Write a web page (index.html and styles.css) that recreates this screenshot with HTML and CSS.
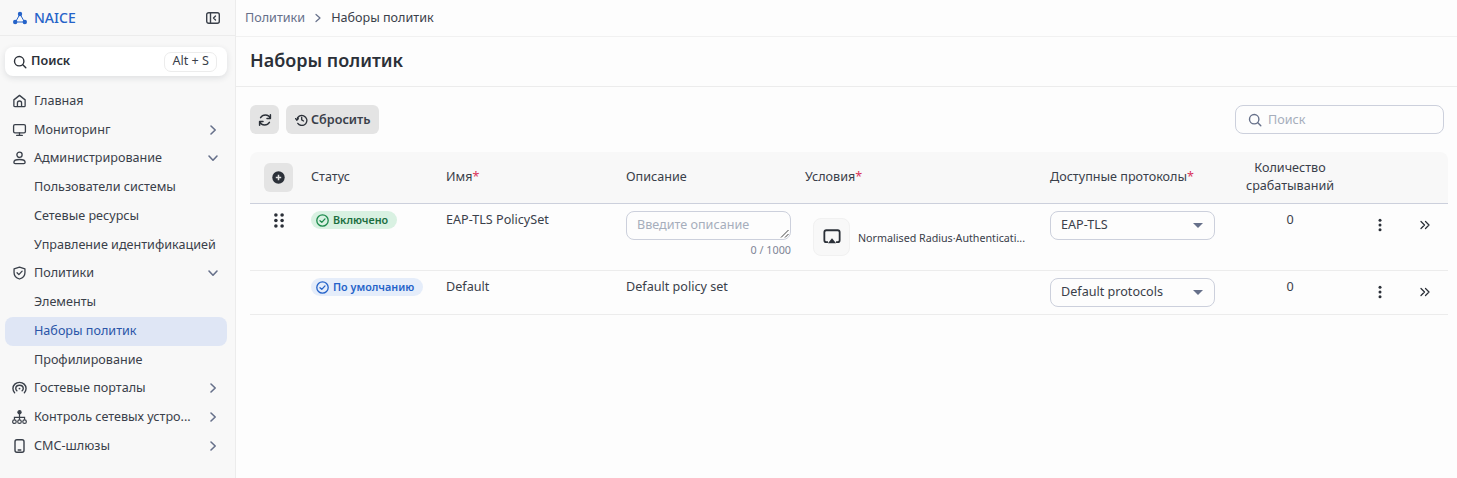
FILE: index.html
```html
<!DOCTYPE html>
<html lang="ru">
<head>
<meta charset="utf-8">
<title>Наборы политик</title>
<link rel="stylesheet" href="styles.css">
</head>
<body>
<div class="app">
  <aside class="sidebar">
    <div class="brand">
      <div class="logo">
        <svg width="16" height="16" viewBox="0 0 16 16" fill="none"><path d="M8 4L3.5 12H12.5Z" stroke="#2563c9" stroke-width="1"/><circle cx="8" cy="4" r="2.2" fill="#2563c9"/><circle cx="3.2" cy="12" r="2.2" fill="#2563c9"/><circle cx="12.8" cy="12" r="2.2" fill="#2563c9"/></svg>
        <span>NAICE</span>
      </div>
      <svg class="collapse" width="14" height="14" viewBox="0 0 14 14" fill="none" stroke="#3a404a" stroke-width="1.4"><rect x="0.7" y="1.7" width="12.6" height="10.6" rx="2"/><path d="M4.5 2V12" /><path d="M9.5 5L7.5 7L9.5 9" stroke-linecap="round" stroke-linejoin="round"/></svg>
    </div>
    <div class="quick">
      <svg width="14" height="14" viewBox="0 0 14 14" fill="none" stroke="#2b3038" stroke-width="1.4" stroke-linecap="round"><circle cx="6.2" cy="6.2" r="4.7"/><path d="M9.8 9.8L12.8 12.8"/></svg>
      <span class="quick-label">Поиск</span>
      <span class="kbd">Alt + S</span>
    </div>
    <nav class="nav">
      <div class="item">
        <svg class="ico" viewBox="0 0 16 16" fill="none" stroke="#3a404a" stroke-width="1.4" stroke-linejoin="round"><path d="M2 6.8L8 2L14 6.8V13C14 13.6 13.6 14 13 14H3C2.4 14 2 13.6 2 13Z"/><path d="M5.8 14V10.2C5.8 9 6.8 8 8 8S10.2 9 10.2 10.2V14"/></svg>
        <span class="label">Главная</span>
      </div>
      <div class="item">
        <svg class="ico" viewBox="0 0 16 16" fill="none" stroke="#3a404a" stroke-width="1.4" stroke-linecap="round"><rect x="1.7" y="2.2" width="12.6" height="8.8" rx="1.5"/><path d="M8 11V13.6M5 13.8H11"/></svg>
        <span class="label">Мониторинг</span>
        <svg class="chev" viewBox="0 0 12 12" fill="none" stroke="#66708a" stroke-width="1.6" stroke-linecap="round" stroke-linejoin="round"><path d="M4 2L8.2 6L4 10"/></svg>
      </div>
      <div class="item">
        <svg class="ico" viewBox="0 0 16 16" fill="none" stroke="#3a404a" stroke-width="1.4"><circle cx="8" cy="4.6" r="2.8"/><path d="M2 12.6C2 10.6 4.6 9.6 8 9.6S14 10.6 14 12.6C14 13.6 13.4 14 12.6 14H3.4C2.6 14 2 13.6 2 12.6Z"/></svg>
        <span class="label">Администрирование</span>
        <svg class="chev" viewBox="0 0 12 12" fill="none" stroke="#66708a" stroke-width="1.6" stroke-linecap="round" stroke-linejoin="round"><path d="M2 4L6 8.2L10 4"/></svg>
      </div>
      <div class="item sub">Пользователи системы</div>
      <div class="item sub">Сетевые ресурсы</div>
      <div class="item sub">Управление идентификацией</div>
      <div class="item">
        <svg class="ico" viewBox="0 0 16 16" fill="none" stroke="#3a404a" stroke-width="1.4" stroke-linecap="round" stroke-linejoin="round"><path d="M8 1.8L13.8 3.6V7.6C13.8 11 11.4 13.2 8 14.4C4.6 13.2 2.2 11 2.2 7.6V3.6Z"/><path d="M5.4 7.8L7.3 9.7L10.8 6"/></svg>
        <span class="label">Политики</span>
        <svg class="chev" viewBox="0 0 12 12" fill="none" stroke="#66708a" stroke-width="1.6" stroke-linecap="round" stroke-linejoin="round"><path d="M2 4L6 8.2L10 4"/></svg>
      </div>
      <div class="item sub">Элементы</div>
      <div class="item sub active">Наборы политик</div>
      <div class="item sub">Профилирование</div>
      <div class="item">
        <svg class="ico" viewBox="0 0 16 16" fill="none" stroke="#3a404a" stroke-width="1.5" stroke-linecap="round"><path d="M2.8 13C1.6 11.8 1 10.2 1 8.6C1 4.8 4.1 2 8 2S15 4.8 15 8.6C15 10.2 14.4 11.8 13.2 13"/><path d="M5.2 11C4.5 10.3 4 9.4 4 8.5C4 6.5 5.8 5 8 5S12 6.5 12 8.5C12 9.4 11.5 10.3 10.8 11"/><circle cx="8" cy="8.6" r="1" fill="#3a404a" stroke="none"/></svg>
        <span class="label">Гостевые порталы</span>
        <svg class="chev" viewBox="0 0 12 12" fill="none" stroke="#66708a" stroke-width="1.6" stroke-linecap="round" stroke-linejoin="round"><path d="M4 2L8.2 6L4 10"/></svg>
      </div>
      <div class="item">
        <svg class="ico" viewBox="0 0 16 16" fill="none" stroke="#3a404a" stroke-width="1.3"><circle cx="8" cy="3" r="1.7" fill="#3a404a"/><circle cx="2.6" cy="13" r="1.9"/><circle cx="8" cy="13" r="1.9"/><circle cx="13.4" cy="13" r="1.9"/><path d="M8 4.5V11M2.6 11V8.5H13.4V11"/></svg>
        <span class="label">Контроль сетевых устро...</span>
        <svg class="chev" viewBox="0 0 12 12" fill="none" stroke="#66708a" stroke-width="1.6" stroke-linecap="round" stroke-linejoin="round"><path d="M4 2L8.2 6L4 10"/></svg>
      </div>
      <div class="item">
        <svg class="ico" viewBox="0 0 16 16" fill="none" stroke="#3a404a" stroke-width="1.5" stroke-linecap="round"><rect x="3.2" y="1.4" width="9.6" height="13.2" rx="2"/><path d="M6.6 12.2H9.4"/></svg>
        <span class="label">СМС-шлюзы</span>
        <svg class="chev" viewBox="0 0 12 12" fill="none" stroke="#66708a" stroke-width="1.6" stroke-linecap="round" stroke-linejoin="round"><path d="M4 2L8.2 6L4 10"/></svg>
      </div>
    </nav>
  </aside>
  <main class="main">
    <div class="crumbs">
      <span class="crumb-link">Политики</span>
      <svg width="10" height="10" viewBox="0 0 10 10" fill="none" stroke="#66708a" stroke-width="1.2" stroke-linecap="round" stroke-linejoin="round"><path d="M3 1.5L7 5L3 8.5"/></svg>
      <span class="crumb-cur">Наборы политик</span>
    </div>
    <header class="page-head"><h1>Наборы политик</h1></header>
    <section class="content">
      <div class="toolbar">
        <div class="btn-group">
          <button class="btn icon-btn" type="button">
            <svg width="14" height="14" viewBox="0 0 14 14" fill="none" stroke="#2b3038" stroke-width="1.5" stroke-linecap="round" stroke-linejoin="round"><path d="M12.2 5.4C11.5 3.3 9.6 2 7.4 2C5.3 2 3.6 3 2.6 4.6M12.4 1.8V5.4H9"/><path d="M1.8 8.6C2.5 10.7 4.4 12 6.6 12C8.7 12 10.4 11 11.4 9.4M1.6 12.2V8.6H5"/></svg>
          </button>
          <button class="btn" type="button">
            <svg width="13" height="13" viewBox="0 0 14 14" fill="none" stroke="#2b3038" stroke-width="1.4" stroke-linecap="round" stroke-linejoin="round"><path d="M3 11.2A5.4 5.4 0 1 0 2 7.5"/><path d="M0.6 6L2 7.6L3.6 6.2"/><path d="M7.2 4.4V7.4L9.2 8.6"/></svg>
            Сбросить
          </button>
        </div>
        <div class="search">
          <svg width="14" height="14" viewBox="0 0 14 14" fill="none" stroke="#66708a" stroke-width="1.4" stroke-linecap="round"><circle cx="6.2" cy="6.2" r="4.7"/><path d="M9.8 9.8L12.8 12.8"/></svg>
          <span>Поиск</span>
        </div>
      </div>
      <table class="grid">
        <colgroup>
          <col class="c-drag"><col class="c-status"><col class="c-name"><col class="c-desc"><col class="c-cond"><col class="c-proto"><col class="c-count"><col class="c-menu"><col class="c-exp">
        </colgroup>
        <thead>
          <tr>
            <th class="first"><span class="add"><svg width="13" height="13" viewBox="0 0 13 13"><circle cx="6.5" cy="6.5" r="6.2" fill="#2b3038"/><path d="M6.5 3.8V9.2M3.8 6.5H9.2" stroke="#e4e4e4" stroke-width="1.5"/></svg></span></th>
            <th>Статус</th>
            <th>Имя<i>*</i></th>
            <th>Описание</th>
            <th>Условия<i>*</i></th>
            <th>Доступные протоколы<i>*</i></th>
            <th class="count">Количество<br>срабатываний</th>
            <th></th>
            <th></th>
          </tr>
        </thead>
        <tbody>
          <tr class="r1">
            <td class="drag"><svg width="10" height="15" viewBox="0 0 10 15" fill="#2b3038"><circle cx="1.9" cy="2" r="1.8"/><circle cx="8.1" cy="2" r="1.8"/><circle cx="1.9" cy="7.5" r="1.8"/><circle cx="8.1" cy="7.5" r="1.8"/><circle cx="1.9" cy="13" r="1.8"/><circle cx="8.1" cy="13" r="1.8"/></svg></td>
            <td><span class="tag green"><svg width="13" height="13" viewBox="0 0 13 13" fill="none" stroke="#1c8a4c" stroke-width="1.3" stroke-linecap="round" stroke-linejoin="round"><circle cx="6.5" cy="6.5" r="5.7"/><path d="M4 6.7L5.8 8.4L9 4.9"/></svg>Включено</span></td>
            <td class="text">EAP-TLS PolicySet</td>
            <td>
              <div class="fake-area">Введите описание<svg class="grip" width="9" height="9" viewBox="0 0 9 9" stroke="#444" stroke-width="1"><path d="M1 8.5L8.5 1M5 8.5L8.5 5"/></svg></div>
              <div class="counter">0 / 1000</div>
            </td>
            <td class="cond-cell">
              <div class="cond">
                <span class="cond-ico"><svg width="18" height="18" viewBox="0 0 16 16" fill="none"><path d="M4.4 12.6H3C2 12.6 1.2 11.8 1.2 10.8V3.8C1.2 2.8 2 2 3 2H13C14 2 14.8 2.8 14.8 3.8V10.8C14.8 11.8 14 12.6 13 12.6H11.6" stroke="#2b3038" stroke-width="1.6"/><path d="M8 9.2L11.6 13.6H4.4Z" fill="#2b3038"/></svg></span>
                <span class="cond-text">Normalised Radius·Authenticati...</span>
              </div>
            </td>
            <td><div class="select"><span>EAP-TLS</span><b></b></div></td>
            <td class="count-v">0</td>
            <td class="act kebab"><svg width="4" height="14" viewBox="0 0 4 14" fill="#2b3038"><circle cx="2" cy="2.2" r="1.5"/><circle cx="2" cy="7" r="1.5"/><circle cx="2" cy="11.8" r="1.5"/></svg></td>
            <td class="act"><svg width="12" height="12" viewBox="0 0 12 12" fill="none" stroke="#2b3038" stroke-width="1.3" stroke-linecap="round" stroke-linejoin="round"><path d="M2 2.5L5.5 6L2 9.5M6.5 2.5L10 6L6.5 9.5"/></svg></td>
          </tr>
          <tr class="r2">
            <td></td>
            <td><span class="tag blue"><svg width="13" height="13" viewBox="0 0 13 13" fill="none" stroke="#2563c9" stroke-width="1.3" stroke-linecap="round" stroke-linejoin="round"><circle cx="6.5" cy="6.5" r="5.7"/><path d="M4 6.7L5.8 8.4L9 4.9"/></svg>По умолчанию</span></td>
            <td class="text">Default</td>
            <td class="text">Default policy set</td>
            <td></td>
            <td><div class="select"><span>Default protocols</span><b></b></div></td>
            <td class="count-v">0</td>
            <td class="act kebab"><svg width="4" height="14" viewBox="0 0 4 14" fill="#2b3038"><circle cx="2" cy="2.2" r="1.5"/><circle cx="2" cy="7" r="1.5"/><circle cx="2" cy="11.8" r="1.5"/></svg></td>
            <td class="act"><svg width="12" height="12" viewBox="0 0 12 12" fill="none" stroke="#2b3038" stroke-width="1.3" stroke-linecap="round" stroke-linejoin="round"><path d="M2 2.5L5.5 6L2 9.5M6.5 2.5L10 6L6.5 9.5"/></svg></td>
          </tr>
        </tbody>
      </table>
    </section>
  </main>
</div>
</body>
</html>
```
FILE: styles.css
```css
* { box-sizing: border-box; }
html, body { margin: 0; height: 100%; overflow: hidden; }
body {
  font-family: "Noto Sans", "Open Sans", sans-serif;
  font-size: 12.6px;
  line-height: 18px;
  color: #3a404a;
  background: #fdfdfd;
}
.app { display: flex; height: 478px; }

/* Sidebar */
.sidebar {
  width: 236px;
  flex: none;
  background: #f8f8f8;
  border-right: 1px solid #ececec;
}
.brand {
  height: 36px;
  padding: 0 15px 0 12px;
  display: flex;
  align-items: center;
  justify-content: space-between;
  border-bottom: 1px solid #ececec;
}
.logo { display: flex; align-items: center; gap: 6px; color: #2563c9; font-size: 14px; font-weight: 500; }
.quick {
  margin: 11px 8px 0 5px;
  height: 29px;
  padding: 0 10px 0 8px;
  display: flex;
  align-items: center;
  gap: 4px;
  background: #fff;
  border-radius: 8px;
  box-shadow: 0 2px 6px rgba(30, 40, 60, .12);
}
.quick-label { flex: 1; font-weight: 600; color: #2b3038; padding-bottom: 2px; }
.kbd {
  height: 20px;
  padding: 0 7px 1px;
  display: flex;
  align-items: center;
  border: 1px solid #ececec;
  border-radius: 7px;
}
.nav { margin-top: 11px; display: flex; flex-direction: column; }
.item {
  height: 28.75px;
  margin: 0 8px 0 5px;
  padding: 0 8px 1px;
  display: flex;
  align-items: center;
  gap: 6px;
  border-radius: 8px;
  white-space: nowrap;
}
.ico { width: 15px; height: 16px; flex: none; margin-left: -1px; margin-right: 1px; }
.label { flex: 1; }
.chev { width: 12px; height: 12px; flex: none; }
.sub { padding-left: 29px; }
.active { background: #dfe6f5; color: #2a55a8; }

/* Main */
.main { flex: 1; min-width: 0; }
.crumbs {
  height: 37px;
  padding: 0 9px;
  display: flex;
  align-items: center;
  gap: 8px;
  border-bottom: 1px solid #f1f1f1;
}
.crumb-link { color: #66708a; }
.crumb-cur { color: #3a404a; }
.page-head {
  height: 50px;
  padding: 0 14px 3px;
  display: flex;
  align-items: center;
  border-bottom: 1px solid #ececec;
}
h1 { margin: 0; font-size: 18px; line-height: 24px; font-weight: 600; color: #2b3038; }
.content { padding: 18px 9px 0 14px; }
.toolbar { display: flex; justify-content: space-between; align-items: center; height: 29px; margin-right: 4px; }
.btn-group { display: flex; gap: 7px; }
.btn {
  height: 29px;
  padding: 0 9px;
  display: flex;
  align-items: center;
  gap: 3px;
  border: 0;
  border-radius: 6px;
  background: #e4e4e4;
  font: 600 12.6px/18px "Noto Sans", sans-serif;
  color: #3a404a;
}
.icon-btn { width: 29px; padding: 0; justify-content: center; }
.search {
  width: 209px;
  height: 29px;
  padding: 0 12px 0;
  display: flex;
  align-items: center;
  gap: 6px;
  border: 1px solid #ccd0dc;
  border-radius: 8px;
  color: #a6aebc;
}

/* Table */
.grid { margin-top: 18px; width: 1198px; table-layout: fixed; border-collapse: separate; border-spacing: 0; }
.c-drag { width: 47px; }
.c-status { width: 135px; }
.c-name { width: 180px; }
.c-desc { width: 179px; }
.c-cond { width: 245px; }
.c-proto { width: 179px; }
.c-count { width: 150px; }
.c-menu { width: 37px; }
.c-exp { width: 46px; }
th {
  height: 52px;
  padding: 0 0 2px 14px;
  text-align: left;
  font-weight: 400;
  background: #f8f8f8;
  border-bottom: 1px solid #ccd0dc;
}
th:first-child { border-top-left-radius: 8px; }
th:last-child { border-top-right-radius: 8px; }
th i { font-style: normal; color: #d9345c; }
th.count { text-align: center; padding-left: 0; line-height: 18px; }
.add {
  width: 29px;
  height: 29px;
  margin-top: 2px;
  display: flex;
  align-items: center;
  justify-content: center;
  background: #e4e4e4;
  border-radius: 6px;
}
td {
  padding: 7px 0 0 14px;
  vertical-align: top;
  border-bottom: 1px solid #ececec;
}
.r1 td { height: 67px; }
.r2 td { height: 44px; }
td.drag { padding: 9px 0 0 24px; }
td.text { padding-top: 7px; }
.tag {
  display: inline-flex;
  align-items: center;
  gap: 4px;
  height: 18px;
  padding: 0 9px 0 5px;
  border-radius: 9px;
  font-size: 10.8px;
  font-weight: 600;
  white-space: nowrap;
}
.green { background: #d9f1e2; color: #1c6e40; }
.blue { background: #e5edfa; color: #2563c9; }
.fake-area {
  position: relative;
  height: 29px;
  padding: 4px 10px;
  border: 1px solid #ccd0dc;
  border-radius: 8px;
  color: #a6aebc;
  background: #fdfdfd;
}
.grip { position: absolute; right: 1px; bottom: 1px; }
.counter { margin-top: 2px; text-align: right; font-size: 10.8px; line-height: 16px; color: #7d8595; }
td.cond-cell { padding: 14px 0 0 22px; }
.cond { display: flex; align-items: center; gap: 8px; height: 38px; }
.cond-ico {
  width: 37px;
  height: 38px;
  flex: none;
  display: flex;
  align-items: center;
  justify-content: center;
  background: #f8f8f8;
  border: 1px solid #f1f1f1;
  border-radius: 8px;
}
.cond-text { font-size: 10.7px; white-space: nowrap; padding-top: 1px; color: #3a404a; }
.select {
  height: 29px;
  padding: 0 11px 2px 10px;
  display: flex;
  align-items: center;
  justify-content: space-between;
  border: 1px solid #ccd0dc;
  border-radius: 8px;
}
.select b { width: 0; height: 0; border-left: 5px solid transparent; border-right: 5px solid transparent; border-top: 5px solid #66708a; margin-top: 2px; }
td.count-v { text-align: center; padding-top: 7px; padding-left: 0; color: #3a404a; }
td.act { padding: 14px 0 0; text-align: center; }
td.kebab { padding-right: 8px; }
.act svg { display: inline-block; }
```
